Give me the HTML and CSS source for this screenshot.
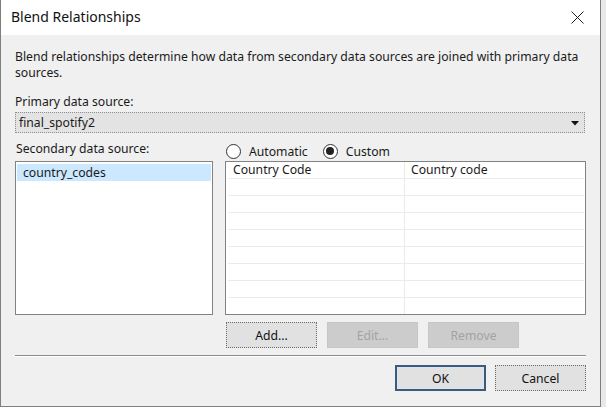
FILE: index.html
```html
<!DOCTYPE html>
<html>
<head>
<meta charset="utf-8">
<link rel="stylesheet" href="styles.css">
</head>
<body>
<div class="screen">
<div class="window">
  <div class="titlebar">
    <span class="title">Blend Relationships</span>
    <svg class="close" width="13" height="13" viewBox="0 0 13 13"><path d="M0.5 0.5 L12.5 12.5 M12.5 0.5 L0.5 12.5" stroke="#1f1f1f" stroke-width="1" fill="none"/></svg>
  </div>
  <div class="body">
    <p class="desc">Blend relationships determine how data from secondary data sources are joined with primary data<br>sources.</p>
    <div class="label primary">Primary data source:</div>
    <div class="select">
      <span>final_spotify2</span>
      <svg class="arrow" width="8" height="5" viewBox="0 0 8 5"><path d="M0 0 H8 L4 4.5 Z" fill="#111"/></svg>
    </div>
    <div class="columns">
      <div class="leftcol">
        <div class="label sec">Secondary data source:</div>
        <div class="list">
          <div class="item selected">country_codes</div>
        </div>
      </div>
      <div class="rightcol">
        <div class="radios">
          <label class="radio"><span class="circle"></span>Automatic</label>
          <label class="radio"><span class="circle checked"></span>Custom</label>
        </div>
        <div class="table">
          <div class="row"><div class="cell c1">Country Code</div><div class="cell">Country code</div></div>
          <div class="row"><div class="cell c1"></div><div class="cell"></div></div>
          <div class="row"><div class="cell c1"></div><div class="cell"></div></div>
          <div class="row"><div class="cell c1"></div><div class="cell"></div></div>
          <div class="row"><div class="cell c1"></div><div class="cell"></div></div>
          <div class="row"><div class="cell c1"></div><div class="cell"></div></div>
          <div class="row"><div class="cell c1"></div><div class="cell"></div></div>
          <div class="row"><div class="cell c1"></div><div class="cell"></div></div>
          <div class="row last"><div class="cell c1"></div><div class="cell"></div></div>
        </div>
        <div class="actions">
          <button class="btn">Add...</button>
          <button class="btn disabled">Edit...</button>
          <button class="btn disabled">Remove</button>
        </div>
      </div>
    </div>
    <div class="sep"></div>
    <div class="footer">
      <button class="btn default">OK</button>
      <button class="btn">Cancel</button>
    </div>
  </div>
</div>
<div class="outside"></div>
</div>
</body>
</html>
```
FILE: styles.css
```css
html, body {
  margin: 0;
  padding: 0;
  background: #f0f0f0;
}
body {
  font-family: "Noto Sans", "Open Sans", sans-serif;
  font-size: 12.2px;
  color: #1a1a1a;
  width: 606px;
  height: 407px;
  overflow: hidden;
}
.screen {
  display: flex;
  height: 407px;
}
.outside {
  flex: 1;
  background: #e9e9e9;
}
.window {
  width: 601px;
  height: 407px;
  flex: none;
  box-sizing: border-box;
  border-left: 1px solid #7f7f7f;
  border-right: 1px solid #7f7f7f;
  border-bottom: 1px solid #7f7f7f;
  background: #f0f0f0;
  display: flex;
  flex-direction: column;
}
.titlebar {
  height: 35px;
  background: #fff;
  display: flex;
  align-items: center;
  justify-content: space-between;
  padding: 0 16px 0 10px;
  flex: none;
  box-sizing: border-box;
}
.title {
  font-size: 14px;
  color: #111;
  line-height: 19px;
  padding-bottom: 2px;
}
.close { margin-top: -1px; }
.body {
  padding: 14px 14px 0 14px;
}
.desc {
  margin: 0;
  line-height: 16px;
}
.label {
  line-height: 16px;
}
.primary { margin-top: 13px; }
.select {
  margin-top: 2px;
  width: 570px;
  height: 21px;
  box-sizing: border-box;
  border: 1px dotted #8d8d8d;
  background: #e3e3e3;
  display: flex;
  align-items: center;
  justify-content: space-between;
  padding: 0 5px 0 3px;
  line-height: 16px;
}
.arrow { margin-top: 1px; }
.columns {
  display: flex;
  gap: 12px;
  margin-top: 8px;
}
.leftcol { width: 198px; display: flex; flex-direction: column; }
.sec { height: 20px; padding-left: 1px; }
.list {
  height: 154px;
  box-sizing: border-box;
  border: 1px solid #828282;
  background: #fff;
  padding: 2px 1px;
}
.item {
  height: 17px;
  line-height: 17px;
  padding-left: 6px;
}
.item.selected { background: #cce8ff; }
.rightcol { width: 361px; display: flex; flex-direction: column; }
.radios {
  display: flex;
  gap: 15px;
  height: 20px;
  align-items: center;
  margin-left: 1px;
}
.radio {
  display: flex;
  align-items: center;
  gap: 8px;
}
.circle {
  width: 15px;
  height: 15px;
  border: 1px solid #333;
  border-radius: 50%;
  background: #fff;
  box-sizing: border-box;
  position: relative;
}
.circle.checked::after {
  content: "";
  position: absolute;
  left: 2.5px; top: 2.5px;
  width: 8px; height: 8px;
  border-radius: 50%;
  background: #222;
}
.table {
  height: 154px;
  box-sizing: border-box;
  border: 1px solid #828282;
  background: #fff;
  padding: 0 1px 0 2px;
  overflow: hidden;
}
.row {
  display: flex;
  height: 17px;
  box-sizing: border-box;
  border-bottom: 1px solid #ebebeb;
}
.cell {
  flex: 1;
  padding-left: 6px;
  line-height: 16px;
}
.cell.c1 {
  flex: none;
  width: 177px;
  padding-left: 5px;
  box-sizing: border-box;
  border-right: 1px solid #ebebeb;
}
.actions {
  display: flex;
  gap: 10px;
  margin-top: 7px;
  margin-left: 1px;
}
.btn {
  font-family: inherit;
  font-size: 12.2px;
  color: #111;
  width: 91px;
  height: 26px;
  box-sizing: border-box;
  background: #e1e1e1;
  border: 1px dotted #6d6d6d;
  padding: 0;
}
.btn.disabled {
  background: #cccccc;
  color: #a3a3a3;
  border: 1px solid #c6c6c6;
}
.sep {
  margin-top: 7px;
  width: 571px;
  height: 1px;
  background: #8c8c8c;
  border-bottom: 1px solid #fff;
}
.footer {
  display: flex;
  justify-content: flex-end;
  gap: 9px;
  margin-top: 8px;
  width: 571px;
}
.btn.default {
  border: 2px solid #3f5a78;
  box-shadow: inset 0 0 0 1px #d5e7f6;
}
```
